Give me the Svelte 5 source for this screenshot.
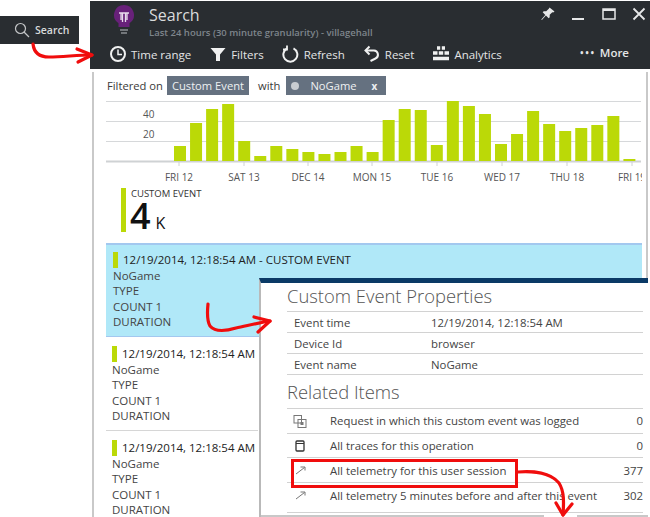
<script>
	const heights = [15, 38, 52, 57, 20, 5, 15, 12, 9, 7, 9, 15, 9, 41, 52, 51, 16, 62, 55, 47, 17, 27, 50, 37, 30, 33, 36, 45, 2]
	const ticks = [
		{ x: 73, label: 'FRI 12' },
		{ x: 138, label: 'SAT 13' },
		{ x: 202, label: 'DEC 14' },
		{ x: 266, label: 'MON 15' },
		{ x: 331, label: 'TUE 16' },
		{ x: 396, label: 'WED 17' },
		{ x: 461, label: 'THU 18' },
		{ x: 526, label: 'FRI 19' }
	]
	const tools = [
		{ icon: 'clock', label: 'Time range' },
		{ icon: 'filter', label: 'Filters' },
		{ icon: 'refresh', label: 'Refresh' },
		{ icon: 'reset', label: 'Reset' },
		{ icon: 'grid', label: 'Analytics' }
	]
	const props = [
		['Event time', '12/19/2014, 12:18:54 AM'],
		['Device Id', 'browser'],
		['Event name', 'NoGame']
	]
	const related = [
		{ icon: 'request', label: 'Request in which this custom event was logged', count: 0 },
		{ icon: 'trace', label: 'All traces for this operation', count: 0 },
		{ icon: 'out', label: 'All telemetry for this user session', count: 377 },
		{ icon: 'out', label: 'All telemetry 5 minutes before and after this event', count: 302 }
	]
</script>

<div class="page">
	<aside class="launcher">
		<div class="tile">
			<svg width="16" height="16" viewBox="0 0 16 16" fill="none" stroke="#c4c6c8" stroke-width="1.2">
				<circle cx="6.5" cy="6.5" r="5" />
				<path d="M10 10l5 5" />
			</svg>
			<span>Search</span>
		</div>
	</aside>

	<main class="blade">
		<header class="head">
			<div class="titlebar">
				<svg class="bulb" width="22" height="32" viewBox="0 0 22 32">
					<path d="M11 1a10 10 0 0 0-5.500 18.300V23h11v-3.700A10 10 0 0 0 11 1z" fill="#68217a" />
					<path d="M6 9h10M8 9v7M14 9v7M9.500 9v9M12.500 9v9" stroke="#e8dcec" stroke-width="1.300" fill="none" />
					<path d="M7 26h8M8 29h6" stroke="#8b8f93" stroke-width="1.500" />
				</svg>
				<div class="titles">
					<h1>Search</h1>
					<p>Last 24 hours (30 minute granularity) - villagehall</p>
				</div>
				<div class="winbtns">
					<svg width="14" height="14" viewBox="0 0 14 14" fill="#e6e7e8"><path d="M8.500 0.500l5 4-1.300 1-0.900-0.300-2.600 2.600 0 2.500-1 1-2.800-2.800-4 4.500-0.600-0.500 4-4.600-2.600-2.600 1-1 2.500 0 2.600-2.600z" /></svg>
					<svg width="14" height="14" viewBox="0 0 14 14" fill="#e6e7e8"><rect x="1" y="11" width="12" height="2" /></svg>
					<svg width="15" height="14" viewBox="0 0 15 14" fill="none" stroke="#e6e7e8"><rect x="2" y="2" width="12" height="10" stroke-width="1.500" /><path d="M2 3h12" stroke-width="2" /></svg>
					<svg width="14" height="14" viewBox="0 0 14 14" fill="none" stroke="#e6e7e8" stroke-width="1.800"><path d="M1.500 1.500l11 11M12.500 1.500l-11 11" /></svg>
				</div>
			</div>
			<nav class="toolbar">
				{#each tools as tool}
					<button type="button" class="tool">
						<svg width="18" height="18" viewBox="0 0 18 18" fill="none" stroke="#f0f1f1" stroke-width="2">
							{#if tool.icon === 'clock'}
								<circle cx="9" cy="9" r="7" />
								<path d="M9 4.500V9.500H13" stroke-width="1.500" />
							{:else if tool.icon === 'filter'}
								<path d="M1.500 3h15L11 9.500V16l-4-0V9.500z" fill="#f0f1f1" stroke="none" />
							{:else if tool.icon === 'refresh'}
								<path d="M11.500 3.400A7 7 0 1 1 5 3.500" />
								<path d="M5 0.500V4.500H1" stroke-width="1.800" />
							{:else if tool.icon === 'reset'}
								<path d="M3 5.500h8a4.200 4.200 0 0 1 1.500 8L7.500 16" />
								<path d="M6.500 1.500L2.500 5.500 6.500 9.500" />
							{:else}
								<path d="M5 3h3.200M9.800 3h3.200M1 8h4.500M6.800 8h4.400M12.500 8h4.500M1 13.500h16" stroke-width="3.600" />
							{/if}
						</svg>
						<span>{tool.label}</span>
					</button>
				{/each}
				<button type="button" class="tool more"><b>•••</b><span>More</span></button>
			</nav>
		</header>

		<section class="body">
			<div class="filterbar">
				<span>Filtered on</span>
				<span class="chip">Custom Event</span>
				<span class="with">with</span>
				<span class="chip value"><i></i>NoGame<b>x</b></span>
			</div>

			<svg class="chart" width="536" height="91" viewBox="0 0 536 91">
				{#each [0, 20, 40, 60] as y}
					<line x1="0" x2="535" y1={y + 0.5} y2={y + 0.5} stroke={y === 60 ? '#cfd2d4' : '#d6d8da'} stroke-width={y === 60 ? 2 : 1} />
				{/each}
				<text x="37" y="17" class="axis">40</text>
				<text x="37" y="37" class="axis">20</text>
				{#each heights as h, i}
					<rect x={68 + i * 16.05} y={60 - h} width="12" height={h} fill="#bbd907" />
				{/each}
				{#each ticks as tick}
					<line x1={tick.x} x2={tick.x} y1="61" y2="65" stroke="#cfd2d4" />
					<text x={tick.x} y="80" text-anchor="middle" class="axis">{tick.label}</text>
				{/each}
			</svg>

			<div class="tally">
				<div class="tally-bar"></div>
				<div>
					<div class="tally-label">CUSTOM EVENT</div>
					<div class="tally-num">4<small>K</small></div>
				</div>
			</div>

			<ul class="results">
				<li class="result selected">
					<div class="result-title"><i></i>12/19/2014, 12:18:54 AM - CUSTOM EVENT</div>
					<div>NoGame</div>
					<div>TYPE</div>
					<div>COUNT 1</div>
					<div>DURATION</div>
				</li>
				<li class="result">
					<div class="result-title"><i></i>12/19/2014, 12:18:54 AM</div>
					<div>NoGame</div>
					<div>TYPE</div>
					<div>COUNT 1</div>
					<div>DURATION</div>
				</li>
				<li class="result">
					<div class="result-title"><i></i>12/19/2014, 12:18:54 AM</div>
					<div>NoGame</div>
					<div>TYPE</div>
					<div>COUNT 1</div>
					<div>DURATION</div>
				</li>
			</ul>
		</section>
	</main>

	<!-- detail blade is a screenshot overlay on top of the results list -->
	<section class="detail">
		<h2>Custom Event Properties</h2>
		<table class="props">
			<tbody>
				{#each props as [name, value]}
					<tr><td class="name">{name}</td><td>{value}</td></tr>
				{/each}
			</tbody>
		</table>
		<h2 class="related-head">Related Items</h2>
		<ul class="related">
			{#each related as item}
				<li>
					<svg width="14" height="14" viewBox="0 0 14 14" fill="none" stroke="#777" stroke-width="1">
						{#if item.icon === 'request'}
							<rect x="1" y="1.500" width="7.500" height="7.500" />
							<rect x="5" y="5.500" width="8" height="8" />
							<rect x="7.500" y="8" width="3" height="3" fill="#777" stroke="none" />
						{:else if item.icon === 'trace'}
							<rect x="3" y="2" width="8" height="10" rx="1" stroke="#333" stroke-width="1.300" />
							<path d="M3 4.500h8" stroke="#333" />
						{:else}
							<path d="M3 11L11.500 4.500M7.500 4H12V7.500" />
						{/if}
					</svg>
					<span class="rel-label">{item.label}</span>
					<span class="rel-count">{item.count}</span>
				</li>
			{/each}
		</ul>
		<div class="rule"><span></span><span></span></div>
	</section>

	<div class="callout"></div>

	<svg class="marks" width="650" height="517" viewBox="0 0 650 517" fill="none" stroke="#f00d0d" stroke-width="3.2" stroke-linecap="round" stroke-linejoin="round">
		<path d="M33 44c1 9 6 13 16 13 14 0 28-2 43-2" />
		<path d="M77 49l15 6-14 7" />
		<path d="M208 304c-1 10-1 17 2 22 5 6 16 5 26 2 10-2 22-5 34-7" />
		<path d="M254 317l16 4-12 11" />
		<path d="M518 472c16-1 32 0 41 11 5 8 5 18 4 32" />
		<path d="M556 503l7 12 9-11" />
	</svg>
</div>

<style>
	:global(body) {
		margin: 0;
		background: #fff;
	}

	.page {
		position: relative;
		display: flex;
		width: 650px;
		height: 517px;
		overflow: hidden;
		background: #fff;
		font-family: "Open Sans", "Liberation Sans", sans-serif;
		color: #3a3a3a;
	}

	.launcher {
		width: 90px;
		flex: none;
		padding-top: 16px;
	}

	.tile {
		display: flex;
		align-items: center;
		gap: 5px;
		box-sizing: border-box;
		width: 79px;
		height: 28px;
		padding-left: 14px;
		background: #292d31;
		color: #d8dadb;
		font-size: 10.500px;
		font-weight: 600;
	}

	.blade {
		flex: 1;
		min-width: 0;
		padding-top: 1px;
		display: flex;
		flex-direction: column;
	}

	.head {
		height: 68px;
		background: #292d31;
		color: #eceded;
		flex: none;
	}

	.titlebar {
		position: relative;
		display: flex;
		height: 38px;
		padding: 3px 0 0 23px;
		box-sizing: border-box;
	}

	.bulb {
		flex: none;
	}

	.titles {
		margin-left: 14px;
	}

	h1 {
		margin: 0;
		font-size: 16px;
		font-weight: 400;
		line-height: 22px;
		color: #d9dbdc;
	}

	.titles p {
		margin: 0;
		font-size: 9.500px;
		line-height: 13px;
		font-weight: 600;
		color: #7e858c;
		white-space: nowrap;
	}

	.winbtns {
		margin-left: auto;
		padding: 3px 4px 0 0;
		display: flex;
		gap: 16px;
	}

	.toolbar {
		display: flex;
		align-items: center;
		height: 30px;
		padding-left: 19px;
	}

	.tool {
		display: flex;
		align-items: center;
		gap: 4px;
		padding: 0;
		margin-right: 18px;
		border: none;
		background: none;
		color: #e4e5e6;
		font: inherit;
		font-size: 11.500px;
	}

	.tool.more {
		margin: -3px 21px 0 auto;
		font-weight: 600;
	}

	.tool.more b {
		font-size: 8px;
		letter-spacing: 2px;
	}

	.body {
		flex: 1;
		margin: 3px 2px 0 2px;
		padding: 4px 4px 0 12px;
		border-left: 2px solid #c9c9c9;
		border-right: 2px solid #c9c9c9;
		min-height: 0;
		font-size: 11.500px;
	}

	.filterbar {
		display: flex;
		align-items: center;
		height: 19px;
		margin-left: 1px;
		font-size: 11.200px;
	}

	.chip {
		display: flex;
		align-items: center;
		height: 19px;
		margin-left: 4px;
		padding: 0 5px;
		background: #657180;
		color: #eef0f2;
	}

	.with {
		margin: 0 5px 0 9px;
	}

	.chip.value {
		width: 100px;
		box-sizing: border-box;
		margin-left: 1px;
		padding-left: 5px;
	}

	.chip.value i {
		width: 8px;
		height: 8px;
		margin-right: 11px;
		border-radius: 50%;
		background: #c8ccd1;
	}

	.chip.value b {
		margin-left: auto;
		padding-right: 4px;
		font-size: 10px;
	}

	.chart {
		display: block;
		margin: 6px 0 0 0;
	}

	.axis {
		fill: #555;
		font-size: 10px;
	}

	.tally {
		display: flex;
		gap: 5px;
		height: 44px;
		margin: -4px 0 0 15px;
	}

	.tally-bar {
		width: 5px;
		background: #bbd907;
	}

	.tally-label {
		font-size: 9.500px;
		line-height: 11px;
		color: #333;
	}

	.tally-num {
		font-size: 36px;
		line-height: 33px;
		font-weight: 600;
		color: #111;
		margin-left: -1px;
	}

	.tally-num small {
		margin-left: 5px;
		font-size: 16px;
		font-weight: 400;
	}

	.results {
		list-style: none;
		margin: 11px 0 0 0;
		padding: 0;
	}

	.result {
		box-sizing: border-box;
		height: 94px;
		padding: 8px 0 0 7px;
		line-height: 15.300px;
		color: #444;
		white-space: nowrap;
	}

	.result + .result {
		padding-left: 6px;
		border-bottom: 1px solid #d6d6d6;
		width: 152px;
	}

	.selected {
		background: #b0e8f8;
		border: 1px solid #a3c8ef;
		border-width: 2px 0 1px 0;
		padding-top: 6px;
	}

	.result-title {
		display: flex;
		align-items: center;
		gap: 5px;
		height: 17px;
		color: #222;
	}

	.result-title i {
		width: 5px;
		height: 16px;
		background: #bbd907;
	}

	.detail {
		position: absolute;
		left: 259px;
		top: 278px;
		width: 389px;
		height: 239px;
		box-sizing: border-box;
		padding: 1px 5px 0 26px;
		background: #fff;
		border-top: 5px solid #0a3a66;
		border-left: 2px solid #b9b9b9;
		font-size: 11.400px;
		color: #444;
	}

	h2 {
		margin: 0;
		font-size: 18.400px;
		font-weight: 300;
		line-height: 23px;
		color: #555;
	}

	.props {
		width: 100%;
		margin-top: 4px;
		border-collapse: collapse;
		border-top: 1px solid #d2d2d2;
	}

	.props td {
		height: 20px;
		padding: 0;
		border-bottom: 1px solid #d2d2d2;
	}

	.props .name {
		width: 137px;
		padding-left: 7px;
	}

	.related-head {
		margin-top: 5px;
	}

	.related {
		list-style: none;
		margin: 5px 0 0 0;
		padding: 0;
		border-top: 1px solid #d2d2d2;
	}

	.related li {
		display: flex;
		align-items: center;
		height: 23.700px;
		padding-left: 6px;
		border-bottom: 1px solid #d2d2d2;
	}

	.related li:last-child {
		height: 24px;
		padding-bottom: 5px;
	}

	.rel-label {
		margin-left: 23px;
		white-space: nowrap;
	}

	.rel-count {
		margin-left: auto;
	}

	.rule {
		display: flex;
		justify-content: space-between;
		height: 2px;
		margin: 2px -5px 0 -26px;
	}

	.rule span {
		width: 283px;
		background: #c8c8c8;
	}

	.rule span + span {
		width: 71px;
	}

	.callout {
		position: absolute;
		left: 291px;
		top: 459px;
		width: 227px;
		height: 29px;
		box-sizing: border-box;
		border: 3px solid #f00d0d;
	}

	.marks {
		position: absolute;
		left: 0;
		top: 0;
		pointer-events: none;
	}
</style>
